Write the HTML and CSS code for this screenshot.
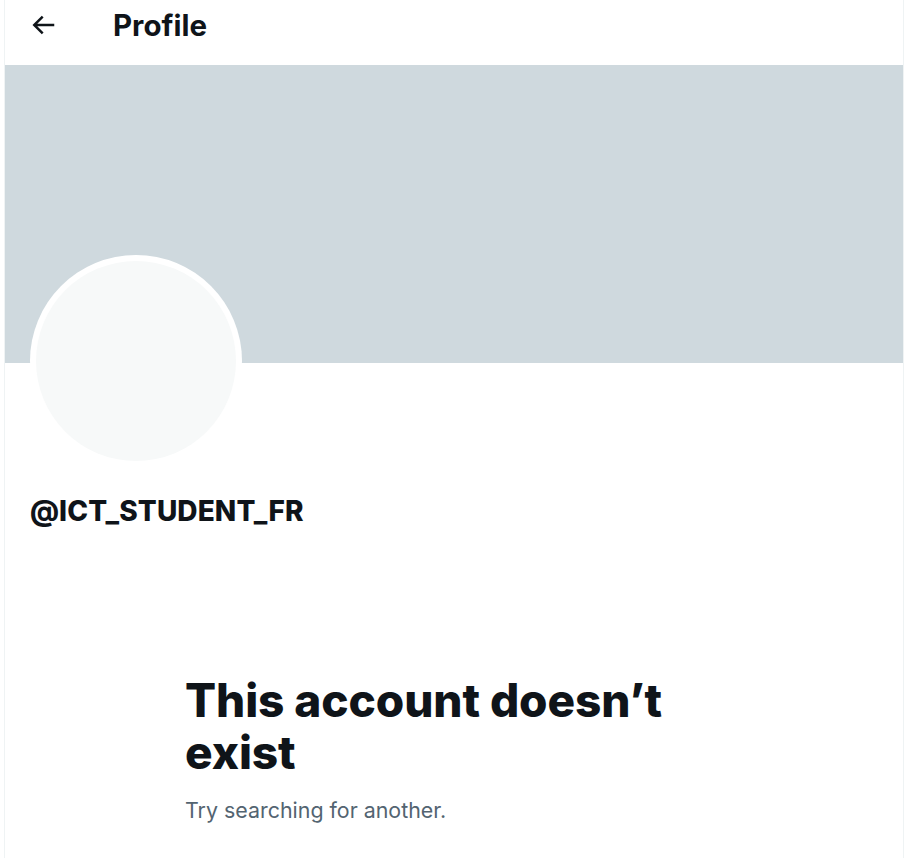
FILE: index.html
```html
<!DOCTYPE html>
<html lang="en">
<head>
<meta charset="utf-8">
<title>Profile</title>
<link rel="stylesheet" href="styles.css">
</head>
<body>
<main class="column">
  <header class="topbar">
    <button class="back" aria-label="Back">
      <svg viewBox="0 0 24 24" width="30" height="30" aria-hidden="true"><path d="M7.414 13l5.043 5.04-1.414 1.42L3.586 12l7.457-7.46 1.414 1.42L7.414 11H21v2H7.414z"/></svg>
    </button>
    <h2 class="title">Profile</h2>
  </header>
  <div class="banner"></div>
  <div class="avatar-row">
    <div class="avatar"><div class="avatar-inner"></div></div>
  </div>
  <div class="handle">@ICT_STUDENT_FR</div>
  <section class="empty">
    <h1 class="empty-title">This account doesn’t exist</h1>
    <p class="empty-sub">Try searching for another.</p>
  </section>
</main>
</body>
</html>
```
FILE: styles.css
```css
html, body {
  margin: 0;
  padding: 0;
  background: #ffffff;
}
body {
  font-family: Inter, "Noto Sans", sans-serif;
  color: #0f1419;
  height: 858px;
  overflow: hidden;
}
.column {
  margin-left: 4px;
  width: 898px;
  min-height: 858px;
  border-left: 1px solid #eff3f4;
  border-right: 1px solid #eff3f4;
}
.topbar {
  height: 65px;
  display: flex;
  align-items: center;
}
.back {
  border: 0;
  background: none;
  padding: 0;
  margin-left: 18px;
  width: 40px;
  height: 40px;
  display: flex;
  align-items: center;
  justify-content: center;
  color: #0f1419;
  margin-top: -15px;
}
.back svg { fill: currentColor; }
.title {
  margin: 0 0 0 50px;
  font-size: 29.5px;
  font-weight: 700;
  margin-top: -15px;
  letter-spacing: 0;
}
.banner {
  height: 298px;
  background: #cfd9de;
}
.avatar-row {
  padding-left: 25px;
  margin-top: -108px;
}
.avatar {
  width: 212px;
  height: 212px;
  box-sizing: border-box;
  border-radius: 50%;
  background: #ffffff;
  padding: 6px;
}
.avatar-inner {
  width: 100%;
  height: 100%;
  border-radius: 50%;
  background: #f7f9f9;
}
.handle {
  margin: 24px 0 0 25px;
  font-size: 28px;
  font-weight: 800;
  line-height: 40px;
  letter-spacing: 0.1px;
}
.empty {
  margin: 143px 0 0 180px;
  width: 520px;
}
.empty-title {
  margin: 0;
  font-size: 46px;
  font-weight: 800;
  line-height: 52px;
  letter-spacing: -0.1px;
}
.empty-sub {
  margin: 17px 0 0;
  font-size: 21.4px;
  line-height: 30px;
  color: #536471;
}
```
